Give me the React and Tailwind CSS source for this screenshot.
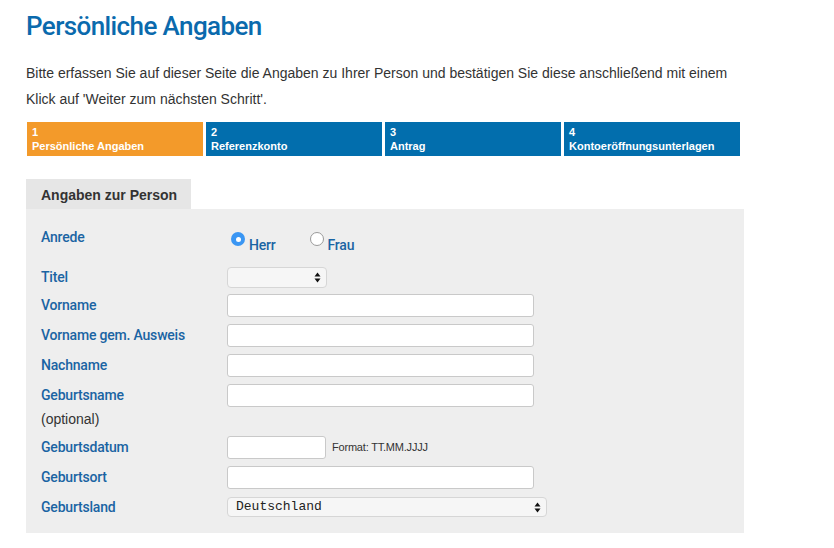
import React from 'react';

const steps = [
  { num: '1', label: 'Persönliche Angaben', active: true },
  { num: '2', label: 'Referenzkonto' },
  { num: '3', label: 'Antrag' },
  { num: '4', label: 'Kontoeröffnungsunterlagen' },
];

const labelCls = "text-[14px] font-medium text-[#1a64a3] tracking-[-0.2px] [font-family:Roboto,sans-serif]";

const TextInput = ({ w = 'w-[307px]' }) => (
  <input type="text" className={`${w} h-[23px] bg-white border border-[#c9c9c9] rounded-[3px] px-1 text-[13px] outline-none`} />
);

const SelectBox = ({ w, value }) => (
  <div className={`${w} h-[20px] bg-[#f6f6f6] border border-[#d6d6d6] rounded-[4px] flex items-center justify-between pl-2 pr-[5px]`}>
    <span className="text-[13px] text-[#222] [font-family:'Liberation_Mono',monospace]">{value}</span>
    <svg width="7" height="11" viewBox="0 0 7 11">
      <path d="M3.5 0.5 L6.5 4.5 L0.5 4.5 Z" fill="#111" />
      <path d="M3.5 10.5 L6.5 6.5 L0.5 6.5 Z" fill="#111" />
    </svg>
  </div>
);

const Row = ({ label, children, h = 'h-[30px]' }) => (
  <div className={`flex items-center ${h}`}>
    <div className={`w-[186px] ${labelCls}`}>{label}</div>
    {children}
  </div>
);

export default function App() {
  return (
    <div className="w-[834px] h-[548px] bg-white overflow-hidden [font-family:'Liberation_Sans',Arial,sans-serif] text-[#333]">
      <div className="pl-[26px] pt-[9px]">
        <h1 className="text-[26px] font-medium text-[#0a6aad] tracking-[-0.6px] leading-[34px] [font-family:Roboto,sans-serif]">
          Persönliche Angaben
        </h1>
        <p className="mt-[17px] text-[14px] leading-[26px] text-[#333]">
          Bitte erfassen Sie auf dieser Seite die Angaben zu Ihrer Person und bestätigen Sie diese anschließend mit einem
          <br />
          Klick auf 'Weiter zum nächsten Schritt'.
        </p>

        <div className="mt-[10px] flex gap-[3px] pl-[1px]">
          {steps.map((s) => (
            <div
              key={s.num}
              className={`w-[176px] h-[34px] px-[5px] pt-[3px] text-white text-[11px] font-bold leading-[14px] ${s.active ? 'bg-[#f39a2a]' : 'bg-[#026ead]'}`}
            >
              <div>{s.num}</div>
              <div>{s.label}</div>
            </div>
          ))}
        </div>

        <div className="mt-[23px] w-[718px]">
          <div className="w-[165px] h-[30px] bg-[#e6e6e6] flex items-center pl-[15px] pt-[2px] text-[14px] font-bold text-[#333]">
            Angaben zur Person
          </div>
          <div className="bg-[#eeeeee] h-[324px] pl-[15px] pt-[14px]">
            <div className="flex h-[32px]">
              <div className={`w-[190px] pt-[4px] ${labelCls}`}>Anrede</div>
              <div className="flex items-start pt-[10px] gap-[4px]">
                <span className="w-[14px] h-[14px] rounded-full bg-[#3a96f3] flex items-center justify-center mt-[-1px]">
                  <span className="w-[5px] h-[5px] rounded-full bg-white" />
                </span>
                <span className={`${labelCls} leading-[16px] mt-[4px]`}>Herr</span>
                <span className="ml-[30px] w-[14px] h-[14px] rounded-full bg-white border border-[#9a9a9a] mt-[-1px]" />
                <span className={`${labelCls} leading-[16px] mt-[4px]`}>Frau</span>
              </div>
            </div>
            <div className="h-[11px]" />
            <Row label="Titel" h="h-[23px]">
              <div className="h-[21px]">
                <SelectBox w="w-[100px] !h-[21px]" value="" />
              </div>
            </Row>
            <div className="h-[1px]" />
            <Row label="Vorname"><TextInput /></Row>
            <Row label="Vorname gem. Ausweis"><TextInput /></Row>
            <Row label="Nachname"><TextInput /></Row>
            <div className="flex h-[52px] pt-[3px]">
              <div className="w-[186px] pt-[2px]">
                <div className={`${labelCls} leading-[20px]`}>Geburtsname</div>
                <div className="text-[14px] text-[#333] leading-[20px] mt-[4px]">(optional)</div>
              </div>
              <div><TextInput /></div>
            </div>
            <Row label="Geburtsdatum">
              <TextInput w="w-[99px]" />
              <span className="ml-[6px] text-[11px] text-[#333] tracking-[-0.2px]">Format: TT.MM.JJJJ</span>
            </Row>
            <Row label="Geburtsort"><TextInput /></Row>
            <Row label="Geburtsland">
              <SelectBox w="w-[320px]" value="Deutschland" />
            </Row>
          </div>
        </div>
      </div>
    </div>
  );
}
